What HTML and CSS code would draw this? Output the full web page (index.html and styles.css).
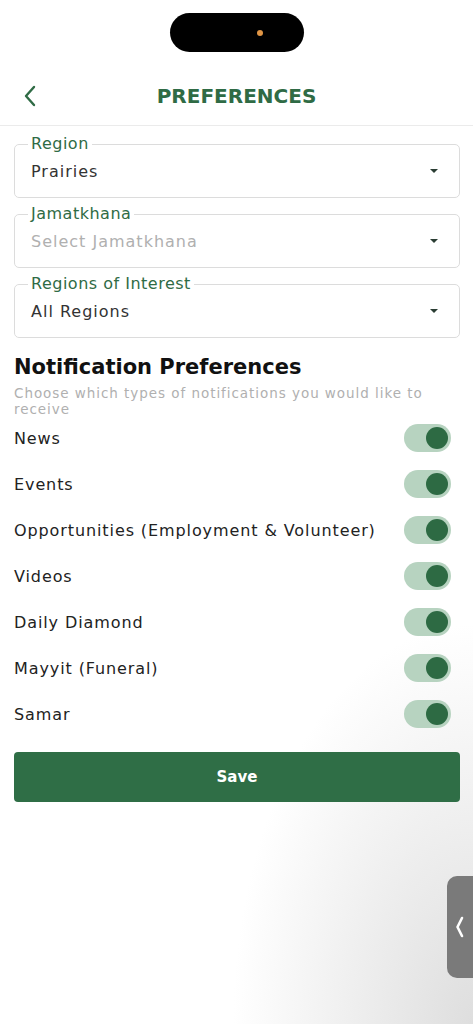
FILE: index.html
```html
<!DOCTYPE html>
<html lang="en">
<head>
    <meta charset="UTF-8">
    <meta name="viewport" content="width=device-width, initial-scale=1.0">
    <title>Preferences</title>
    <link rel="stylesheet" href="styles.css">
</head>
<body>
<div class="screen">
    <div class="notch"><span class="camera"></span></div>

    <header class="topbar">
        <a href="#" class="back" aria-label="Back">
            <svg width="14" height="22" viewBox="0 0 14 22">
                <path d="M11 2 L3 11 L11 20" fill="none" stroke="#2f6b45" stroke-width="2.4" stroke-linecap="round" stroke-linejoin="round"/>
            </svg>
        </a>
        <h1>PREFERENCES</h1>
    </header>

    <main class="content">
        <fieldset class="field">
            <legend>Region</legend>
            <div class="select">
                <span>Prairies</span>
                <span class="caret"></span>
            </div>
        </fieldset>
        <fieldset class="field">
            <legend>Jamatkhana</legend>
            <div class="select">
                <span class="placeholder">Select Jamatkhana</span>
                <span class="caret"></span>
            </div>
        </fieldset>
        <fieldset class="field">
            <legend>Regions of Interest</legend>
            <div class="select">
                <span>All Regions</span>
                <span class="caret"></span>
            </div>
        </fieldset>

        <h2>Notification Preferences</h2>
        <p class="hint">Choose which types of notifications you would like to receive</p>

        <ul class="toggles">
            <li><span>News</span><span class="switch on"></span></li>
            <li><span>Events</span><span class="switch on"></span></li>
            <li><span>Opportunities (Employment &amp; Volunteer)</span><span class="switch on"></span></li>
            <li><span>Videos</span><span class="switch on"></span></li>
            <li><span>Daily Diamond</span><span class="switch on"></span></li>
            <li><span>Mayyit (Funeral)</span><span class="switch on"></span></li>
            <li><span>Samar</span><span class="switch on"></span></li>
        </ul>

        <button class="save">Save</button>
    </main>

    <div class="side-tab">
        <svg width="12" height="24" viewBox="0 0 12 24">
            <path d="M8 3 L3.5 12 L8 21" fill="none" stroke="#fff" stroke-width="2.6" stroke-linecap="round" stroke-linejoin="round"/>
        </svg>
    </div>
</div>
</body>
</html>
```

FILE: styles.css
```css
body {
    margin: 0;
    font-family: "DejaVu Sans", "Open Sans", sans-serif;
    color: #222;
    background-color: #fff;
}
.screen {
    position: relative;
    min-height: 1024px;
    background: radial-gradient(240px 400px at 100% 100%, #dedede 0%, rgba(255, 255, 255, 0) 100%), #fff;
    overflow: hidden;
}
.notch {
    position: relative;
    width: 134px;
    height: 39px;
    margin: 13px auto 0;
    background-color: #000;
    border-radius: 20px;
}
.camera {
    position: absolute;
    top: 17px;
    left: 87px;
    width: 6px;
    height: 6px;
    border-radius: 50%;
    background-color: #e09545;
}
.topbar {
    position: relative;
    display: flex;
    align-items: center;
    justify-content: center;
    height: 58px;
    margin-top: 15px;
    border-bottom: 1px solid #ebebeb;
}
.back {
    position: absolute;
    left: 23px;
    top: 18px;
    display: flex;
}
.topbar h1 {
    margin: 0;
    font-size: 20px;
    font-weight: 700;
    color: #2f6b45;
}
.content {
    padding: 8px 13px 0 14px;
}
.field {
    margin: 0 0 6px;
    padding: 0 21px 15px 13px;
    border: 1px solid #dcdcdc;
    border-radius: 5px;
}
.field legend {
    padding: 0 3px;
    font-size: 16px;
    line-height: 20px;
    letter-spacing: 0.5px;
    color: #2f6b45;
}
.select {
    display: flex;
    align-items: center;
    justify-content: space-between;
    margin-top: 6px;
    padding-left: 3px;
    height: 22px;
    font-size: 16px;
    letter-spacing: 1px;
    color: #333;
}
.select .placeholder {
    color: #b0b0b0;
}
.caret {
    width: 0;
    height: 0;
    border-left: 4px solid transparent;
    border-right: 4px solid transparent;
    border-top: 4px solid #2a3d33;
}
.content h2 {
    margin: 16px 0 0;
    font-size: 21px;
    line-height: 26px;
    font-weight: 700;
    color: #111;
}
.hint {
    max-width: 425px;
    margin: 5px 0 0;
    font-size: 13.5px;
    line-height: 16px;
    letter-spacing: 0.95px;
    color: #b0b0b0;
}
.toggles {
    list-style: none;
    margin: -2px 0 0;
    padding: 0;
}
.toggles li {
    display: flex;
    align-items: center;
    justify-content: space-between;
    height: 46px;
    font-size: 16px;
    letter-spacing: 0.9px;
    color: #222;
}
.switch {
    position: relative;
    width: 47px;
    height: 28px;
    margin-right: 9px;
    border-radius: 14px;
    background-color: #b7d3c0;
}
.switch.on::after {
    content: '';
    position: absolute;
    top: 3px;
    right: 3px;
    width: 22px;
    height: 22px;
    border-radius: 50%;
    background-color: #2d6a43;
}
.save {
    display: block;
    width: 100%;
    height: 50px;
    margin-top: 15px;
    border: none;
    border-radius: 4px;
    background-color: #2f6e46;
    color: #fff;
    font-family: inherit;
    font-size: 15px;
    font-weight: 700;
    cursor: pointer;
}
.side-tab {
    position: absolute;
    top: 876px;
    right: 0;
    width: 26px;
    height: 102px;
    display: flex;
    align-items: center;
    justify-content: center;
    border-radius: 10px 0 0 10px;
    background-color: #7a7a7a;
}
```
